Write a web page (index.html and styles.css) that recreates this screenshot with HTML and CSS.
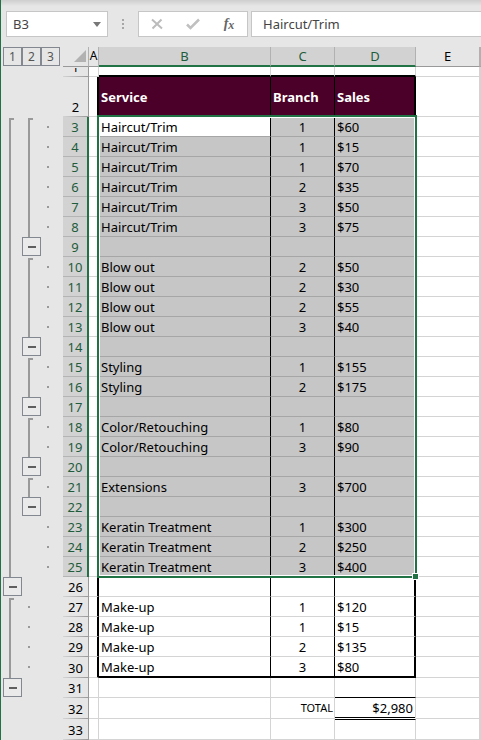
FILE: index.html
```html
<!DOCTYPE html>
<html lang="en">
<head>
<meta charset="utf-8">
<title>Salon sales</title>
<link rel="stylesheet" href="styles.css">
</head>
<body>
<div class="window">
	<div class="formula-bar">
		<div class="name-box">
			<input type="text" value="B3" aria-label="Name box">
			<button type="button" aria-label="Open name list"><svg width="8" height="5"><path d="M0 0h8L4 5z" fill="#777"/></svg></button>
		</div>
		<div class="grip"><i></i><i></i><i></i></div>
		<div class="tools">
			<button type="button" aria-label="Cancel"><svg width="12" height="12" viewBox="0 0 12 12"><path d="M1 1.500L11 10.500M10.500 1.500L1.500 10.500" fill="none" stroke="#bcbcbc" stroke-width="2"/></svg></button>
			<button type="button" aria-label="Enter"><svg width="14" height="12" viewBox="0 0 14 12"><path d="M1 6.500L4.500 10L13 1.500" fill="none" stroke="#c0c0c0" stroke-width="2.500"/></svg></button>
			<button type="button" class="fx" aria-label="Insert function">f<small>x</small></button>
		</div>
		<input type="text" class="formula" value="Haircut/Trim" aria-label="Formula">
	</div>

	<div class="sheet">
		<table>
			<colgroup>
				<col class="w-level"><col class="w-level"><col class="w-last"><col class="w-num">
				<col class="w-a"><col class="w-b"><col class="w-c"><col class="w-d"><col class="w-e"><col>
			</colgroup>
			<thead>
				<tr>
					<td class="o"><button type="button">1</button></td>
					<td class="o"><button type="button">2</button></td>
					<td class="o"><button type="button">3</button></td>
					<td class="corner"><svg width="12" height="12"><path d="M12 0v12H0z" fill="#b2b2b2"/></svg></td>
					<th class="a">A</th><th class="on">B</th><th class="on">C</th><th class="on">D</th><th>E</th><th></th>
				</tr>
			</thead>
			<tbody>
				<tr class="r1"><td class="o"></td><td class="o"></td><td class="o"></td><th><div>1</div></th><td></td><td></td><td></td><td></td><td></td><td></td></tr>
				<tr class="box title"><td class="o"></td><td class="o"></td><td class="o"></td><th>2</th><td></td><td>Service</td><td>Branch</td><td>Sales</td><td></td><td></td></tr>
				<!-- selected rows -->
				<tr class="box sel"><td class="o bracket" rowspan="23"></td><td class="o bracket" rowspan="6"></td><td class="o dot"></td><th>3</th><td></td><td class="active">Haircut/Trim</td><td>1</td><td>$60</td><td></td><td></td></tr>
				<tr class="box sel"><td class="o dot"></td><th>4</th><td></td><td>Haircut/Trim</td><td>1</td><td>$15</td><td></td><td></td></tr>
				<tr class="box sel"><td class="o dot"></td><th>5</th><td></td><td>Haircut/Trim</td><td>1</td><td>$70</td><td></td><td></td></tr>
				<tr class="box sel"><td class="o dot"></td><th>6</th><td></td><td>Haircut/Trim</td><td>2</td><td>$35</td><td></td><td></td></tr>
				<tr class="box sel"><td class="o dot"></td><th>7</th><td></td><td>Haircut/Trim</td><td>3</td><td>$50</td><td></td><td></td></tr>
				<tr class="box sel"><td class="o dot"></td><th>8</th><td></td><td>Haircut/Trim</td><td>3</td><td>$75</td><td></td><td></td></tr>
				<tr class="box sel"><td class="o"><button type="button" class="fold" aria-label="Collapse rows 3 to 8"></button></td><td class="o"></td><th>9</th><td></td><td></td><td></td><td></td><td></td><td></td></tr>
				<tr class="box sel"><td class="o bracket" rowspan="4"></td><td class="o dot"></td><th>10</th><td></td><td>Blow out</td><td>2</td><td>$50</td><td></td><td></td></tr>
				<tr class="box sel"><td class="o dot"></td><th>11</th><td></td><td>Blow out</td><td>2</td><td>$30</td><td></td><td></td></tr>
				<tr class="box sel"><td class="o dot"></td><th>12</th><td></td><td>Blow out</td><td>2</td><td>$55</td><td></td><td></td></tr>
				<tr class="box sel"><td class="o dot"></td><th>13</th><td></td><td>Blow out</td><td>3</td><td>$40</td><td></td><td></td></tr>
				<tr class="box sel"><td class="o"><button type="button" class="fold" aria-label="Collapse rows 10 to 13"></button></td><td class="o"></td><th>14</th><td></td><td></td><td></td><td></td><td></td><td></td></tr>
				<tr class="box sel"><td class="o bracket" rowspan="2"></td><td class="o dot"></td><th>15</th><td></td><td>Styling</td><td>1</td><td>$155</td><td></td><td></td></tr>
				<tr class="box sel"><td class="o dot"></td><th>16</th><td></td><td>Styling</td><td>2</td><td>$175</td><td></td><td></td></tr>
				<tr class="box sel"><td class="o"><button type="button" class="fold" aria-label="Collapse rows 15 to 16"></button></td><td class="o"></td><th>17</th><td></td><td></td><td></td><td></td><td></td><td></td></tr>
				<tr class="box sel"><td class="o bracket" rowspan="2"></td><td class="o dot"></td><th>18</th><td></td><td>Color/Retouching</td><td>1</td><td>$80</td><td></td><td></td></tr>
				<tr class="box sel"><td class="o dot"></td><th>19</th><td></td><td>Color/Retouching</td><td>3</td><td>$90</td><td></td><td></td></tr>
				<tr class="box sel"><td class="o"><button type="button" class="fold" aria-label="Collapse rows 18 to 19"></button></td><td class="o"></td><th>20</th><td></td><td></td><td></td><td></td><td></td><td></td></tr>
				<tr class="box sel"><td class="o bracket"></td><td class="o dot"></td><th>21</th><td></td><td>Extensions</td><td>3</td><td>$700</td><td></td><td></td></tr>
				<tr class="box sel"><td class="o"><button type="button" class="fold" aria-label="Collapse row 21"></button></td><td class="o"></td><th>22</th><td></td><td></td><td></td><td></td><td></td><td></td></tr>
				<tr class="box sel"><td class="o"></td><td class="o dot"></td><th>23</th><td></td><td>Keratin Treatment</td><td>1</td><td>$300</td><td></td><td></td></tr>
				<tr class="box sel"><td class="o"></td><td class="o dot"></td><th>24</th><td></td><td>Keratin Treatment</td><td>2</td><td>$250</td><td></td><td></td></tr>
				<tr class="box sel"><td class="o"></td><td class="o dot"></td><th>25</th><td></td><td>Keratin Treatment</td><td>3</td><td>$400</td><td></td><td></td></tr>
				<!-- rest of the list -->
				<tr class="box"><td class="o"><button type="button" class="fold" aria-label="Collapse rows 3 to 25"></button></td><td class="o"></td><td class="o"></td><th>26</th><td></td><td></td><td></td><td></td><td></td><td></td></tr>
				<tr class="box"><td class="o bracket" rowspan="4"></td><td class="o dot"></td><td class="o"></td><th>27</th><td></td><td>Make-up</td><td>1</td><td>$120</td><td></td><td></td></tr>
				<tr class="box"><td class="o dot"></td><td class="o"></td><th>28</th><td></td><td>Make-up</td><td>1</td><td>$15</td><td></td><td></td></tr>
				<tr class="box"><td class="o dot"></td><td class="o"></td><th>29</th><td></td><td>Make-up</td><td>2</td><td>$135</td><td></td><td></td></tr>
				<tr class="box end"><td class="o dot"></td><td class="o"></td><th>30</th><td></td><td>Make-up</td><td>3</td><td>$80</td><td></td><td></td></tr>
				<tr class="before-total"><td class="o"><button type="button" class="fold" aria-label="Collapse rows 27 to 30"></button></td><td class="o"></td><td class="o"></td><th>31</th><td></td><td></td><td></td><td></td><td></td><td></td></tr>
				<tr class="total"><td class="o"></td><td class="o"></td><td class="o"></td><th>32</th><td></td><td></td><td>TOTAL</td><td>$2,980</td><td></td><td></td></tr>
				<tr class="after-total"><td class="o"></td><td class="o"></td><td class="o"></td><th>33</th><td></td><td></td><td></td><td></td><td></td><td></td></tr>
			</tbody>
		</table>
		<div class="selection"><span class="handle"></span></div>
	</div>
</div>
</body>
</html>
```
FILE: styles.css
```css
*{
	box-sizing: border-box;
}
body{
	margin: 0;
	background: #e6e6e6;
	font: 13px/16px "Noto Sans", "Open Sans", sans-serif;
	color: #000;
}
button, input{
	font: inherit;
	color: #444;
	margin: 0;
	padding: 0;
	border: 0;
	background: none;
}
.window{
	min-height: 100vh;
	border-left: 1px solid #217346;
	overflow: hidden;
}

/* formula bar */
.formula-bar{
	display: flex;
	padding: 11px 0 10px 5px;
	background: linear-gradient(#cecece, #e6e6e6 6px);
}
.name-box, .tools, .formula{
	height: 26px;
	border: 1px solid #c6c6c6;
	background: #fff;
}
.name-box{
	display: flex;
	width: 102px;
}
.name-box input{
	flex: 1;
	min-width: 0;
	padding-left: 6px;
}
.name-box button{
	display: flex;
	align-items: center;
	justify-content: center;
	width: 20px;
}
.grip{
	display: flex;
	flex-direction: column;
	align-items: center;
	justify-content: center;
	gap: 2px;
	width: 30px;
}
.grip i{
	width: 2px;
	height: 2px;
	background: #a6a6a6;
}
.tools{
	display: flex;
	width: 110px;
	margin-right: 3px;
}
.tools button{
	display: flex;
	flex: 1;
	align-items: center;
	justify-content: center;
}
.tools .fx{
	font: italic bold 14px/20px "Liberation Serif", serif;
	color: #666;
}
.fx small{
	font-size: 12px;
	padding-top: 2px;
}
.formula{
	flex: 1;
	min-width: 0;
	padding-left: 11px;
	border-right: 0;
}

/* grid */
.sheet{
	position: relative;
	padding-left: 2px;
}
table{
	width: 100%;
	table-layout: fixed;
	border-collapse: separate;
	border-spacing: 0;
}
.w-level{ width: 19px; }
.w-last{ width: 22px; }
.w-num{ width: 26px; }
.w-a{ width: 10px; }
.w-b{ width: 172px; }
.w-c{ width: 64px; }
.w-d{ width: 81px; }
.w-e{ width: 64px; }

td, th{
	height: 20px;
	padding: 0 2px;
	border: 0 solid #d4d4d4;
	border-width: 0 1px 1px 0;
	background: #fff;
	font-weight: normal;
	text-align: left;
	white-space: nowrap;
}
td:nth-last-child(4){
	text-align: center;
}
th{
	padding: 0;
	text-align: center;
}
thead th, thead .corner{
	padding-bottom: 1px;
	background: #e6e6e6;
	border-color: #b1b1b1;
	border-bottom-color: #999;
}
thead th.a{
	font-size: 12px;
}
thead .on{
	padding-bottom: 0;
	background: #d2d2d2;
	border-bottom: 2px solid #217346;
	color: #1e5c3c;
}
.corner{
	text-align: right;
}
.corner svg{
	display: block;
	margin-left: auto;
}
tbody th{
	border-right-color: #999;
	border-bottom: 0;
	background: linear-gradient(90deg, #d4d4d4, #999) bottom / 100% 1px no-repeat #e6e6e6;
}
.sel th{
	border-right: 2px solid #217346;
	background: linear-gradient(#b4b4b4, #b4b4b4) bottom / 100% 1px no-repeat #d2d2d2;
	color: #1e5c3c;
}

/* outline levels */
.o{
	padding: 0;
	border: 0;
	background: #e6e6e6;
	vertical-align: top;
}
.o button{
	display: block;
	width: 19px;
	height: 19px;
	border: 1px solid #83878f;
	color: #555;
	font-size: 12px;
	line-height: 17px;
}
.o .fold{
	background: linear-gradient(#5f5f5f, #5f5f5f) 5px 8px / 8px 2px no-repeat #eaeaea;
}
.bracket{
	background:
		linear-gradient(#999, #999) 6px 1px / 5px 2px no-repeat,
		linear-gradient(#999, #999) 6px 1px / 2px 100% no-repeat,
		#e6e6e6;
}
.dot{
	background: linear-gradient(#999, #999) 6px 9px / 2px 2px no-repeat #e6e6e6;
}

/* rows */
.r1 td, .r1 th{
	height: 10px;
	line-height: 8px;
}
/* row 1 is scrolled half out of view */
.r1 th div{
	height: 8px;
	overflow: hidden;
	line-height: 0;
	font-size: 12px;
}
.r1 td:nth-last-child(3), .r1 td:nth-last-child(4), .r1 td:nth-last-child(5){
	border-bottom: 2px solid #000;
}
.box td:nth-last-child(6){
	border-right: 2px solid #000;
}
.box td:nth-last-child(5), .box td:nth-last-child(4){
	border-right-color: #000;
}
.box td:nth-last-child(3){
	border-right: 2px solid #000;
}
.title td, .title th{
	height: 40px;
}
.title th{
	padding-bottom: 2px;
	vertical-align: bottom;
}
.title td:nth-last-child(3), .title td:nth-last-child(4), .title td:nth-last-child(5){
	background: #4a0028;
	color: #fff;
	font-weight: bold;
	text-align: left;
}
.sel td:nth-last-child(3), .sel td:nth-last-child(4), .sel td:nth-last-child(5){
	background: #c6c6c6;
	border-bottom-color: #a6a6a6;
}
.sel td.active:nth-last-child(5){
	background: #fff;
}
.end td, .end th, .total td, .total th, .after-total td, .after-total th{
	height: 21px;
}
.end td:nth-last-child(3), .end td:nth-last-child(4), .end td:nth-last-child(5){
	border-bottom: 2px solid #000;
}
.before-total td:nth-last-child(3){
	border-bottom-color: #000;
}
.total td:nth-last-child(4){
	padding-right: 1px;
	font-size: 11px;
	text-align: right;
}
.total td:nth-last-child(3){
	border-bottom-color: #fff;
	box-shadow: inset 0 -1px #000;
	text-align: right;
}
.after-total td:nth-last-child(3){
	border-top: 1px solid #000;
}

/* marquee round B3:D25 */
.selection{
	position: absolute;
	top: 68px;
	left: 96px;
	width: 320px;
	height: 463px;
	border: 2px solid #217346;
	box-shadow: inset 0 0 0 1px #fff;
	pointer-events: none;
}
.handle{
	position: absolute;
	right: -4px;
	bottom: -4px;
	width: 7px;
	height: 7px;
	border: 1px solid #fff;
	background: #217346;
}
```
